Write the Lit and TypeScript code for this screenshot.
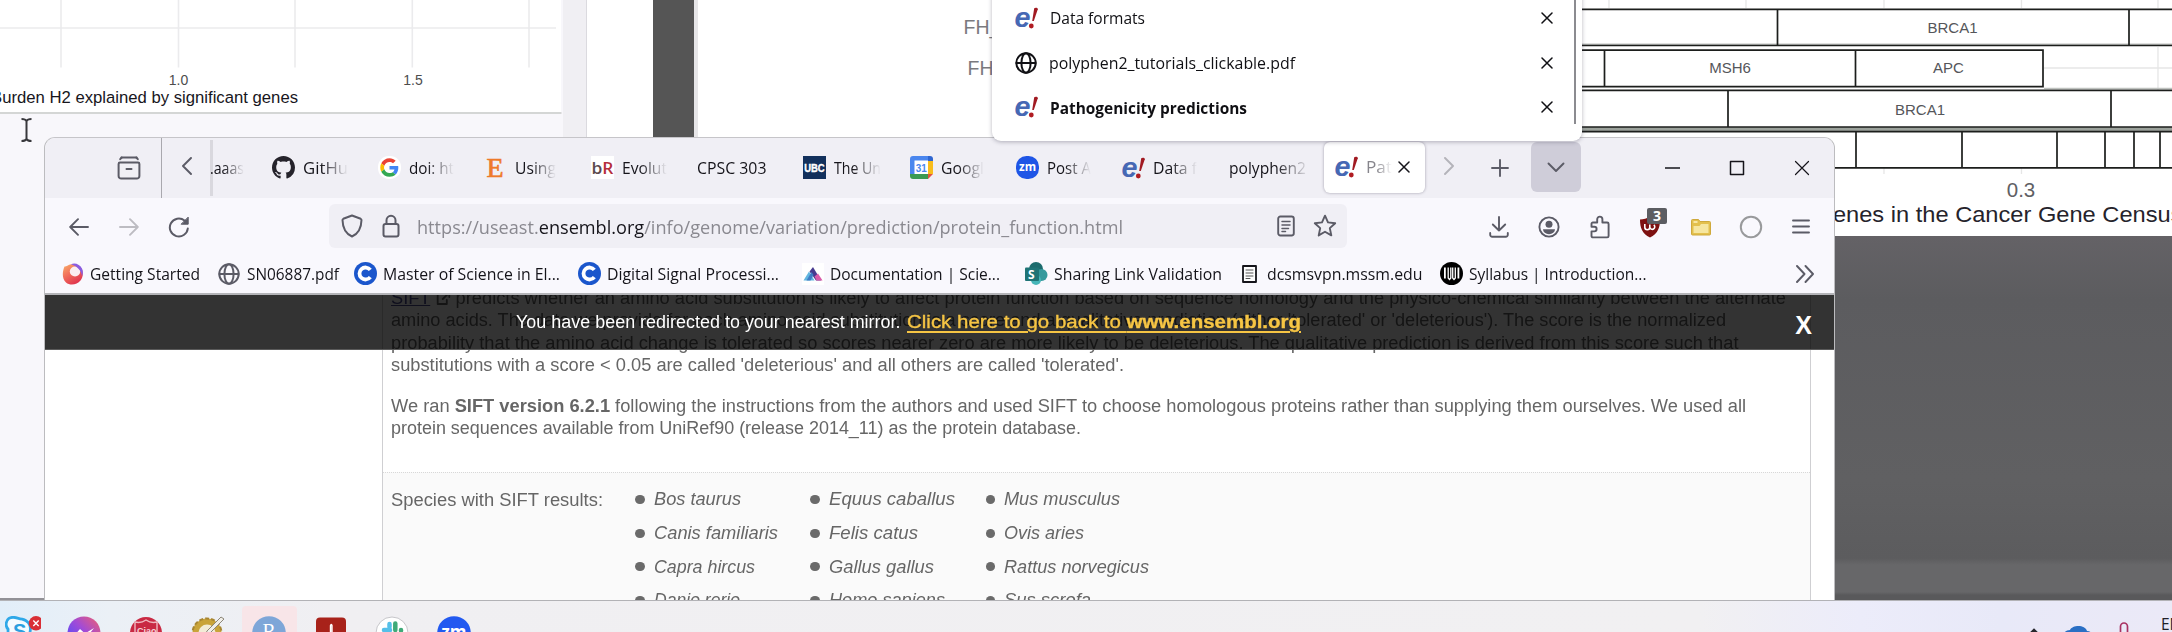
import { LitElement, html, svg, css } from "lit";
import { customElement, property, query } from "lit/decorators.js";

/* A label that condenses or widens its text to an exact advance width. */
@customElement("fit-label")
class FitLabel extends LitElement {
  @property({ type: Number }) w = 0;
  @query("span") box!: HTMLSpanElement;
  static styles = css`
    :host { display: inline-block; white-space: nowrap; flex: none; }
    span { display: inline-block; transform-origin: 0 50%; }
  `;
  updated() {
    const natural = this.box.offsetWidth;
    this.style.width = this.w + "px";
    if (natural && this.w) this.box.style.transform = `scaleX(${this.w / this.box.getBoundingClientRect().width})`;
  }
  render() { return html`<span><slot></slot></span>`; }
}

const line = (w: number, h: number, body: unknown, sw = 1.9) => html`
  <svg width=${w} height=${h} viewBox="0 0 ${w} ${h}" fill="none" stroke="currentColor" stroke-width=${sw}
    stroke-linecap="round" stroke-linejoin="round">${body}</svg>`;
const solid = (w: number, h: number, body: unknown) => html`
  <svg width=${w} height=${h} viewBox="0 0 ${w} ${h}">${body}</svg>`;

const ICON: Record<string, () => unknown> = {
  archive: () => line(24, 24, svg`<path d="M4.5 1.5h15M3 6.5h18a1.4 1.4 0 0 1 1.4 1.4V20a2.6 2.6 0 0 1-2.6 2.6H4.200A2.600 2.600 0 0 1 1.600 20V7.900A1.400 1.400 0 0 1 3 6.500zM9.500 13h5"/><path d="M3.200 3.200l1.500-1.700M20.800 3.200l-1.500-1.700"/>`, 2),
  left: () => line(12, 18, svg`<path d="M10 1L2 9l8 8"/>`),
  right: () => line(12, 18, svg`<path d="M2 1l8 8-8 8"/>`),
  down: () => line(18, 11, svg`<path d="M1.500 1.500L9 9l7.500-7.500"/>`),
  plus: () => line(18, 18, svg`<path d="M9 1v16M1 9h16"/>`),
  close: () => line(12, 12, svg`<path d="M1 1l10 10M11 1L1 11"/>`, 1.5),
  min: () => line(15, 4, svg`<path d="M.500 2h14"/>`, 1.6),
  max: () => line(16, 16, svg`<rect x="1.500" y="1.500" width="13" height="13"/>`, 1.5),
  winclose: () => line(16, 16, svg`<path d="M1.500 1.500l13 13M14.500 1.500l-13 13"/>`, 1.2),
  back: () => line(20, 18, svg`<path d="M19 9H1.500M9 1.200L1.200 9 9 16.800"/>`),
  forward: () => line(20, 18, svg`<path d="M1 9h17.500M11 1.200L18.800 9 11 16.800"/>`),
  reload: () => line(22, 22, svg`<path d="M19.800 12.500A9 9 0 1 1 16.500 4.500L19 6.600"/><path d="M20.200 1.500v6.700h-6.700z" fill="currentColor" stroke-width="1"/>`, 2),
  shield: () => line(22, 24, svg`<path d="M11 1.500l8.700 3.300a1.300 1.300 0 0 1 .8 1.300C20.300 14.500 17 20 11 22.500 5 20 1.700 14.500 1.500 6.100a1.300 1.300 0 0 1 .8-1.300z"/>`, 2),
  lock: () => line(18, 24, svg`<rect x="1.500" y="10" width="15" height="12.500" rx="2"/><path d="M4.500 10V6.300a4.500 4.500 0 0 1 9 0V10"/>`, 2),
  reader: () => line(18, 22, svg`<rect x="1.200" y="1.500" width="15.600" height="19" rx="2.200"/><path d="M5 6.500h8M5 10h8M5 13.500h6.500M5 16.500h3.500" stroke-width="1.500"/>`),
  star: () => line(24, 24, svg`<path d="M12 1.700l3 6.700 7.200.8-5.400 4.900 1.500 7.300L12 17.700l-6.300 3.700 1.500-7.300L1.800 9.200 9 8.400z"/>`),
  download: () => line(20, 22, svg`<path d="M10 1v13.500M3.800 8.500l6.200 6 6.200-6M1.200 17v1.600A2 2 0 0 0 3.200 20.700h13.600a2 2 0 0 0 2-2.100V17"/>`),
  account: () => line(22, 22, svg`<circle cx="11" cy="11" r="9.600"/><circle cx="11" cy="8.300" r="3.500" fill="currentColor" stroke="none"/><path d="M5 13.300h12a6 5 0 0 1-12 0z" fill="currentColor" stroke="none"/>`),
  puzzle: () => line(20, 24, svg`<path d="M7.200 7.500V4.200a2.600 2.600 0 0 1 5.200 0v3.300h4.800a1.400 1.400 0 0 1 1.400 1.400V21a1.400 1.400 0 0 1-1.400 1.400H2.900A1.400 1.400 0 0 1 1.500 21v-4.600h2.800a2.300 2.300 0 0 0 0-4.600H1.500V8.900a1.400 1.400 0 0 1 1.400-1.400z"/>`),
  ublock: () => solid(22, 22, svg`<path d="M11 .500c3 2 6.500 3 10 3 0 8-2 14-10 18C3 17.500 1 11.500 1 3.500c3.500 0 7-1 10-3z" fill="#7d1111"/><path d="M5.800 8v3.200a2.500 2.500 0 0 0 5 0V8.500m0 2.700a2.500 2.500 0 1 0 4-2.300" fill="none" stroke="#fff" stroke-width="1.600"/>`),
  folder: () => solid(22, 18, svg`<path d="M1.500 16V2.500a1 1 0 0 1 1-1h6l1.500 2h9.500a1 1 0 0 1 1 1V16a1 1 0 0 1-1 1h-17a1 1 0 0 1-1-1z" fill="#e3c04d" stroke="#cfa93c"/><path d="M3.500 15V8h6l1.500-2h7.500v9z" fill="#f6e6a0"/><path d="M3.500 4h4" stroke="#fff3c0" stroke-width="1.500"/>`),
  ring: () => line(24, 24, svg`<circle cx="12" cy="12" r="10.200" stroke="#999a9c"/>`, 2),
  menu: () => line(18, 15, svg`<path d="M1 1.500h16M1 7.500h16M1 13.500h16"/>`),
  more: () => line(20, 18, svg`<path d="M2 1l7.500 8L2 17M10.500 1l7.500 8-7.500 8"/>`),
  globe: () => line(22, 22, svg`<circle cx="11" cy="11" r="9.700"/><ellipse cx="11" cy="11" rx="4.600" ry="9.700"/><path d="M1.500 11h19" />`, 2),
  github: () => html`<svg width="23" height="23" viewBox="0 0 16 16"><path fill="#25232b" d="M8 0C3.580 0 0 3.580 0 8c0 3.540 2.290 6.530 5.470 7.590.4.070.55-.17.55-.38 0-.19-.01-.82-.01-1.490-2.010.37-2.530-.49-2.690-.94-.09-.23-.48-.94-.82-1.130-.28-.15-.68-.52-.01-.53.63-.01 1.080.58 1.230.82.72 1.210 1.870.87 2.330.66.07-.52.28-.87.51-1.070-1.780-.2-3.640-.89-3.640-3.950 0-.87.31-1.590.82-2.150-.08-.2-.36-1.020.08-2.120 0 0 .67-.21 2.200.82.64-.18 1.320-.27 2-.27.68 0 1.360.09 2 .27 1.530-1.040 2.200-.82 2.200-.82.44 1.100.16 1.920.08 2.120.51.56.82 1.270.82 2.150 0 3.070-1.870 3.750-3.650 3.950.29.25.54.73.54 1.480 0 1.070-.01 1.930-.01 2.200 0 .21.15.46.55.38A8.010 8.010 0 0 0 16 8c0-4.420-3.580-8-8-8z"/></svg>`,
  google: () => html`<svg width="23" height="23" viewBox="-6 -6 60 60"><rect x="-6" y="-6" width="60" height="60" rx="28" fill="#fff"/><path fill="#EA4335" d="M24 9.500c3.540 0 6.710 1.220 9.210 3.600l6.850-6.850C35.900 2.380 30.470 0 24 0 14.620 0 6.510 5.380 2.560 13.220l7.980 6.190C12.430 13.720 17.740 9.500 24 9.500z"/><path fill="#4285F4" d="M46.980 24.550c0-1.570-.15-3.090-.38-4.550H24v9.020h12.940c-.58 2.960-2.260 5.480-4.780 7.180l7.730 6c4.510-4.180 7.090-10.360 7.090-17.650z"/><path fill="#FBBC05" d="M10.530 28.590c-.48-1.450-.76-2.990-.76-4.590s.27-3.140.76-4.590l-7.980-6.190C.92 16.460 0 20.120 0 24s.92 7.540 2.560 10.780l7.970-6.190z"/><path fill="#34A853" d="M24 48c6.480 0 11.930-2.130 15.890-5.810l-7.730-6c-2.150 1.450-4.920 2.300-8.160 2.300-6.260 0-11.570-4.220-13.470-9.910l-7.980 6.190C6.510 42.620 14.620 48 24 48z"/></svg>`,
  eboard: () => solid(22, 23, svg`<text x="1.500" y="21" font-family="Liberation Serif" font-size="28" fill="#ee7a2a" stroke="#ee7a2a" stroke-width=".7">E</text>`),
  biorxiv: () => solid(23, 23, svg`<rect width="23" height="23" fill="#fff"/><text x="0.500" y="18" font-family="Open Sans, sans-serif" font-weight="600" font-size="17" fill="#5b4a4e" textLength="22" lengthAdjust="spacingAndGlyphs">b<tspan fill="#b52f3c">R</tspan></text>`),
  ubc: () => solid(23, 23, svg`<rect width="23" height="23" fill="#12305c"/><text x="1.200" y="16" font-family="Liberation Sans, sans-serif" font-weight="700" font-size="11.500" fill="#fff" stroke="#fff" stroke-width=".4" textLength="20.500" lengthAdjust="spacingAndGlyphs">UBC</text>`),
  calendar: () => solid(23, 23, svg`<path d="M3 0h15v5H5v13H0V3a3 3 0 0 1 3-3z" fill="#4a86ee"/><path d="M18 0h2a3 3 0 0 1 3 3v2h-5z" fill="#2f66d0"/><path d="M18 5h5v13h-5z" fill="#f8bd1c"/><path d="M0 18h18v5H3a3 3 0 0 1-3-3z" fill="#3b9a52"/><path d="M18 18h5l-5 5z" fill="#e2513f"/><rect x="4.500" y="4.500" width="13.500" height="13.500" fill="#fff"/><text x="5.800" y="15.600" font-family="Liberation Sans, sans-serif" font-size="11.500" font-weight="700" fill="#4a86ee" textLength="11" lengthAdjust="spacingAndGlyphs">31</text>`),
  zoom: () => solid(23, 23, svg`<rect width="23" height="23" rx="10.500" fill="#1f55e6"/><text x="3" y="14.800" font-family="Open Sans, sans-serif" font-weight="700" font-size="11.500" fill="#fff" textLength="17" lengthAdjust="spacingAndGlyphs">zm</text>`),
  ensembl: () => solid(23, 22, svg`<text x="-.500" y="19.500" font-family="Liberation Sans, sans-serif" font-style="italic" font-weight="700" font-size="27" fill="#4668b4" textLength="16" lengthAdjust="spacingAndGlyphs">e</text><path d="M19.200 1.200c1.200-.9 3.600-.6 3.600 1L18.800 14h-1.600z" fill="#a11a22"/><circle cx="16.300" cy="19" r="2.400" fill="#b01c22"/>`),
  firefox: () => html`<svg width="22" height="24" viewBox="0 0 22 24"><defs><linearGradient id="f" x1="0" y1="0" x2=".6" y2="1"><stop offset="0" stop-color="#f9b06a"/><stop offset=".45" stop-color="#f2745c"/><stop offset="1" stop-color="#e0344e"/></linearGradient></defs><path d="M2.500 4.500C4 5 6 3 8 2.500c3-.8 9-.5 11.500 4C21.500 10 21.300 15 18.500 18.500 15 23 8 24 4 20.500-.500 16.500.5 9 2.500 4.500z" fill="url(#f)"/><ellipse cx="13" cy="9.500" rx="5.200" ry="5" fill="#fbeef0"/><path d="M9 2.200c4-1.700 9 0 11.200 4.800 1 2.500.8 5-.2 7.200C19.500 9 16 4.500 9 2.200z" fill="#8a5ce0"/></svg>`,
  cblue: () => solid(23, 23, svg`<ellipse cx="11.500" cy="11.500" rx="11.500" ry="11.500" fill="#1b56cc"/><path d="M16.300 7.900A6 6 0 1 0 16.300 15.100" fill="none" stroke="#fff" stroke-width="3.800"/>`),
  sci: () => solid(22, 22, svg`<rect width="22" height="22" fill="#fff"/><path d="M1.500 17.500L7 8.500l5.500 9z" fill="#62b6e0"/><path d="M7.500 8.500L11 4l8 13.500h-5z" fill="#473a8f"/><path d="M14.500 17.500l-2-4 3.500-3 4.500 7z" fill="#d95aa8"/><path d="M4.500 17.500L9.500 9l2 3-3 5.500z" fill="#3f7cc4"/>`),
  sharepoint: () => solid(23, 23, svg`<circle cx="11" cy="7" r="7" fill="#1c6b6d"/><circle cx="16.500" cy="13" r="6" fill="#35999c"/><circle cx="11" cy="18" r="5" fill="#46b5b8"/><rect y="5.500" width="14" height="13.500" rx="1" fill="#1f7476"/><text x="3" y="16.500" font-family="Open Sans, sans-serif" font-weight="700" font-size="12" fill="#fff">S</text>`),
  page: () => line(15, 18, svg`<rect x="1" y="1" width="13" height="16" fill="#fdfdfd"/><path d="M4 5h7M4 8h7M4 11h7M4 13.500h4" stroke-width="1" stroke="#555"/>`, 1.8),
  canvas: () => solid(23, 23, svg`<circle cx="11.500" cy="11.500" r="11.500" fill="#000"/><path d="M4 5.500h1.800v11H4zM17.500 5.500h1.800v11h-1.800z" fill="#fff"/><path d="M8.200 5.500v10.500l1.300 1.500 1.300-1.500V5.500M12.700 5.500v10.500l1.300 1.500 1.300-1.500V5.500" stroke="#fff" stroke-width="1.300" fill="none"/>`),
  skype: () => solid(36, 36, svg`<path d="M5 2c7-4 11 1 17 1 8 2 12 8 10 17 2 7-3 14-12 12C8 33 3 26 4 16 0 12 1 5 5 2z" transform="scale(.78) translate(0 1)" fill="#f4fbff" stroke="#2fa8e8" stroke-width="3.500"/><text x="8" y="22" font-family="Liberation Sans, sans-serif" font-weight="700" font-size="20" fill="#2a9fe0">S</text><circle cx="31" cy="7.300" r="7.200" fill="#d92f36"/><path d="M28.300 4.600l5.400 5.400M33.700 4.600l-5.400 5.400" stroke="#fff" stroke-width="1.400"/>`),
  messenger: () => html`<svg width="34" height="34" viewBox="0 0 34 34"><defs><linearGradient id="m" x1="0" y1="1" x2="1" y2="0"><stop offset=".2" stop-color="#5f4cf5"/><stop offset=".55" stop-color="#a24bd6"/><stop offset="1" stop-color="#f2606c"/></linearGradient></defs><circle cx="17" cy="17" r="16.500" fill="url(#m)"/><path d="M6 21l7-8 5 4.500 9-5.500-7 9-5-4.500z" fill="#fff"/></svg>`,
  redshield: () => solid(34, 34, svg`<circle cx="17" cy="17" r="16" fill="#c92943"/><path d="M6 6q6 1.500 11-2 5 3.500 11 2v14q-3 7-11 9-8-2-11-9z" fill="none" stroke="#f0b8c0" stroke-width="1.400"/><text x="8" y="17.500" font-family="Liberation Sans, sans-serif" font-size="9" font-weight="700" fill="#f6d3d8">Ciao</text>`),
  gold: () => solid(36, 34, svg`<circle cx="17" cy="17" r="14.500" fill="#c9a43a" stroke="#a88632" stroke-width="2" stroke-dasharray="4 2"/><circle cx="17" cy="17" r="8.500" fill="#f2ecd6"/><path d="M31 1l3 2-15 15-4 1 2-4z" fill="#f0eee8" stroke="#8c8678"/>`),
  rstudio: () => solid(34, 34, svg`<circle cx="17" cy="17" r="16.800" fill="#7ea6d8"/><text x="10.500" y="22" font-family="Liberation Serif, serif" font-size="20" fill="#fff">R</text>`),
  acrobat: () => solid(30, 34, svg`<rect y="1.500" width="30" height="31" rx="4" fill="#a8221a"/><path d="M14.500 20V9.500q1-2 1.500 0V18" stroke="#fff" stroke-width="1.400" fill="none"/>`),
  slack: () => solid(34, 34, svg`<circle cx="17" cy="17" r="16" fill="#fff" stroke="#c6c6ca"/><path d="M14.500 8v3M9 14h6" stroke="#55bfe8" stroke-width="4.500" stroke-linecap="round"/><path d="M20.300 7.500v6.500M26 14v.5" stroke="#3faa78" stroke-width="4.500" stroke-linecap="round"/>`),
  zoomapp: () => solid(34, 34, svg`<circle cx="17" cy="17" r="16.800" fill="#2259f0"/><text x="4.500" y="22" font-family="Open Sans, sans-serif" font-weight="700" font-size="17" fill="#fff" textLength="25" lengthAdjust="spacingAndGlyphs">zm</text>`),
};
const icon = (name: string) => ICON[name]();

const TABS = [
  { icon: "github", text: "GitHu", w: 45 },
  { icon: "google", text: "doi: ht", w: 45 },
  { icon: "eboard", text: "Using", w: 41 },
  { icon: "biorxiv", text: "Evolut", w: 45 },
  { icon: "", text: "CPSC 303", w: 69.500 },
  { icon: "ubc", text: "The Un", w: 47 },
  { icon: "calendar", text: "Googl", w: 43 },
  { icon: "zoom", text: "Post A", w: 44 },
  { icon: "ensembl", text: "Data f", w: 44 },
  { icon: "", text: "polyphen2", w: 77 },
];
const BOOKMARKS = [
  { icon: "firefox", text: "Getting Started", w: 110, span: 156.500 },
  { icon: "globe", text: "SN06887.pdf", w: 92, span: 136.500 },
  { icon: "cblue", text: "Master of Science in El...", w: 177, span: 224 },
  { icon: "cblue", text: "Digital Signal Processi...", w: 172, span: 223 },
  { icon: "sci", text: "Documentation | Scie...", w: 170, span: 224 },
  { icon: "sharepoint", text: "Sharing Link Validation", w: 168, span: 213 },
  { icon: "page", text: "dcsmsvpn.mssm.edu", w: 155.500, span: 201.500 },
  { icon: "canvas", text: "Syllabus | Introduction...", w: 177.500, span: 210 },
];
const SPECIES = [
  [["Bos taurus", 87], ["Canis familiaris", 124], ["Capra hircus", 101], ["Danio rerio", 86]],
  [["Equus caballus", 126], ["Felis catus", 89], ["Gallus gallus", 105], ["Homo sapiens", 116]],
  [["Mus musculus", 116], ["Ovis aries", 80], ["Rattus norvegicus", 145], ["Sus scrofa", 87]],
] as [string, number][][];
const APPS = ["skype", "messenger", "redshield", "gold", "rstudio", "acrobat", "slack", "zoomapp"];

@customElement("left-chart")
class LeftChart extends LitElement {
  static styles = css`
    :host { display: block; }
    svg { display: block; font-family: "Liberation Sans", Arial, sans-serif; }
  `;
  render() {
    return html`<svg width="563" height="115" viewBox="0 0 563 115">
      <rect width="561" height="112" fill="#fff"/>
      <path d="M61 0v67.500M178.500 0v67.500M295 0v67.500M412.300 0v67.500M529 0v67.500M0 28h556" stroke="#ebebed" stroke-width="1.600"/>
      <path d="M0 113h561.500" stroke="#c9cbc9" stroke-width="1.600"/>
      <g font-size="14" fill="#4d4d4d" text-anchor="middle"><text x="178.500" y="85">1.0</text><text x="413" y="85">1.5</text></g>
      <text x="-9" y="102.500" font-size="17.200" fill="#17161c" textLength="307" lengthAdjust="spacingAndGlyphs">Burden H2 explained by significant genes</text>
    </svg>`;
  }
}

@customElement("gene-chart")
class GeneChart extends LitElement {
  static styles = css`
    :host { display: block; }
    svg { display: block; font-family: "Liberation Sans", Arial, sans-serif; }
  `;
  render() {
    return html`<svg width="1474" height="236" viewBox="698 0 1474 236">
      <rect x="698" width="1474" height="236" fill="#fff"/>
      <path d="M1609 0v8M1746 0v8M1884 0v8M2021.500 0v8M2158 0v8M2158 47v43M1884 168v6M2021.500 168v6M2044 68h128" stroke="#e6e6e6" stroke-width="1.300"/>
      <path d="M1582 127h590v5h-590z" fill="#9ba19b"/>
      <path d="M1582 44.300h590M2044 88.500h128" stroke="#bfc2bf" stroke-width="1.500"/>
      <g stroke="#1c1e1c" fill="none" stroke-width="1.700">
        <path d="M1582 9.300h590M1582 45.500h590M1777.500 9v36M2129 9v36"/>
        <path d="M1582 50.200h461v36.500h-461M1604.500 50v37M1855.500 50v37"/>
        <path d="M1582 90.300h590M1582 127h590M1728 90v37M2111 90v37"/>
        <path d="M1582 131.700h590M1800 167.800h372M1856 132v36M1962 132v36M2057 132v36M2105 132v36M2134 132v36M2160 132v36"/>
      </g>
      <g font-size="15" fill="#55565a" text-anchor="middle">
        <text x="1952.500" y="32.700">BRCA1</text><text x="1730" y="73">MSH6</text><text x="1948.500" y="73">APC</text><text x="1920" y="114.500">BRCA1</text>
      </g>
      <g font-size="19.500" fill="#7a7a7e"><text x="963.500" y="34">FH_</text><text x="967.500" y="75">FH_</text></g>
      <text x="2021" y="196.500" font-size="20.500" fill="#606064" text-anchor="middle">0.3</text>
      <text x="1814.500" y="222" font-size="22" fill="#25232b" textLength="368" lengthAdjust="spacingAndGlyphs">Genes in the Cancer Gene Census</text>
    </svg>`;
  }
}

@customElement("browser-window")
class BrowserWindow extends LitElement {
  static styles = css`
    :host { display: flex; flex-direction: column; box-sizing: border-box; height: 463px; border: 1px solid #bcbcbf; border-top-color: #c6c5c9; border-bottom: 0;
      border-radius: 11px 11px 0 0; overflow: hidden; background: #fff; color: #15141a;
      font: 16px/22px "Open Sans", "Noto Sans", sans-serif; }
    svg { display: block; flex: none; }
    .strip { display: flex; height: 60px; flex: none; background: #f0eff5; }
    .archive { box-sizing: border-box; width: 116.500px; border-right: 1.500px solid #a9a8ae; display: flex; align-items: center; padding-left: 72px; color: #5b5b66; }
    .scroll { width: 48.500px; display: flex; align-items: center; justify-content: center; color: #5b5b66; box-sizing: border-box; padding-left: 2px; padding-bottom: 4px; }
    .edge { width: 3px; height: 56px; background: #d9d8de; margin-right: -3px; margin-top: 2px; }
    .clipped { width: 51px; display: flex; align-items: center; overflow: hidden; box-sizing: border-box; padding-right: 17px; padding-bottom: 1px; }
    .tab { width: 106.300px; box-sizing: border-box; padding-left: 11px; padding-bottom: 1px; display: flex; align-items: center; gap: 8px; flex: none; }
    .fade { -webkit-mask-image: linear-gradient(90deg, #000 40%, transparent 100%); mask-image: linear-gradient(90deg, #000 40%, transparent 100%); }
    .fadelong { -webkit-mask-image: linear-gradient(90deg, #000 60%, rgba(0,0,0,.1) 100%); mask-image: linear-gradient(90deg, #000 60%, rgba(0,0,0,.1) 100%); }
    .active { width: 101.500px; height: 51px; margin: 4px 5px 0 0; background: #fff; border-radius: 6px; box-shadow: 0 0 3px rgba(60,55,80,.45); }
    .active fit-label { color: #86858c; }
    .active svg:last-child { margin-left: -2px; }
    .next { width: 38px; display: flex; align-items: center; justify-content: center; color: #b4b3ba; padding-bottom: 4px; }
    .new { width: 63px; display: flex; align-items: center; justify-content: center; color: #5b5b66; }
    .all { width: 50px; height: 50px; margin-top: 4px; background: #cfcdd9; border-radius: 6px; display: flex; align-items: center; justify-content: center; color: #5b5b66; }
    .controls { margin-left: auto; display: flex; padding-bottom: 1px; }
    .controls div { width: 64.500px; display: flex; align-items: center; justify-content: center; }
    .bar { display: flex; align-items: center; height: 56px; flex: none; background: #f9f8fd; padding: 0 7.500px 0 8.500px; color: #5b5b66; }
    .btn { width: 50px; display: flex; justify-content: center; position: relative; padding-top: 1px; }
    .btn.dim { color: #bdbcc2; }
    .url { margin-left: 125.500px; width: 1018px; height: 44px; background: #f0eff5; border-radius: 6px; display: flex; align-items: center; box-sizing: border-box; padding: 0 10px 0 12px; }
    .url fit-label { margin: 0 auto 0 16.500px; font-size: 19px; line-height: 26px; color: #8a8990; padding-top: 1px; }
    .url b { font-weight: 400; color: #15141a; }
    .url .lockbox { margin-left: 19px; }
    .url .starbox { margin-left: 18px; }
    .tools { margin-left: auto; display: flex; align-items: center; }
    .tools .btn { width: 50.400px; }
    .badge { position: absolute; left: 22px; top: -7px; width: 20px; height: 16px; border-radius: 2px; background: #5c5d62; color: #fff; font: 700 14px/16px "Open Sans", sans-serif; text-align: center; }
    .marks { display: flex; align-items: center; flex: none; background: #f9f8fd; padding: 0 19px 0 16.500px; color: #15141a; border-bottom: 2px solid #b4b4b8; box-sizing: border-box; height: 41px; }
    .mark { display: flex; align-items: center; flex: none; }
    .pic { width: 22px; margin-right: 6.500px; display: flex; justify-content: center; }
    .pic.gray, .more { color: #5b5b66; }
    .more { margin-left: auto; }
    .page { position: relative; flex: 1; overflow: hidden; font: 18px/22.600px "Liberation Sans", Arial, sans-serif; color: #666; }
    .panel { margin: 0 23px 0 337px; border: 1px solid #cfcfd2; border-width: 0 1px; height: 310px; }
    .text { padding: 0 8px; height: 177px; box-sizing: border-box; overflow: hidden; }
    .text fit-label { display: block; margin: 0; height: 22.600px; }
    .text .first { margin-top: -8.500px; }
    .text .second { margin-top: 17.700px; }
    .first a { color: #4a4a90; text-decoration: underline; }
    .first svg { display: inline-block; vertical-align: -2px; }
    .species { border-top: 1px dotted #d8d8d8; background: #fafafa; display: flex; padding: 9.500px 8px 0; height: 130px; }
    .species .label { width: 244px; line-height: 34px; }
    ul { list-style: none; margin: 0; padding: 0; width: 175.300px; font-style: italic; }
    li { display: flex; align-items: center; height: 33.800px; gap: 9px; }
    li::before { content: ""; width: 9.500px; height: 9px; border-radius: 50%; background: #6a6a6a; }
    .banner { position: absolute; inset: 0 0 auto 0; height: 55px; background: rgba(0,0,0,.8); color: #fff; display: flex; align-items: center; padding: 1px 0 0 470.500px; box-sizing: border-box; font-size: 18px; border-bottom: 1px solid #5a5a5a; }
    .banner .back { color: #f6c544; margin-left: 7px; }
    .banner u { text-decoration: underline; text-underline-offset: 3px; text-decoration-thickness: 1.500px; -webkit-text-stroke: .35px #f6c544; }
    .dismiss { margin: 5px 22px 0 auto; font-weight: 700; font-size: 25px; }
    .banner .dismiss { line-height: 26px; }
  `;
  render() {
    return html`
      <div class="strip">
        <div class="archive">${icon("archive")}</div>
        <div class="scroll">${icon("left")}</div>
        <div class="edge"></div>
        <div class="clipped"><fit-label class="fade" .w=${34}>.aaas</fit-label></div>
        ${TABS.map(t => html`<div class="tab">${t.icon ? icon(t.icon) : ""}<fit-label class=${t.text === "CPSC 303" ? "" : t.icon ? "fade" : "fadelong"} .w=${t.w}>${t.text}</fit-label></div>`)}
        <div class="tab active">${icon("ensembl")}<fit-label class="fade" .w=${26}>Pat</fit-label>${icon("close")}</div>
        <div class="next">${icon("right")}</div>
        <div class="new">${icon("plus")}</div>
        <div class="all">${icon("down")}</div>
        <div class="controls"><div>${icon("min")}</div><div>${icon("max")}</div><div>${icon("winclose")}</div></div>
      </div>
      <div class="bar">
        <div class="btn">${icon("back")}</div><div class="btn dim">${icon("forward")}</div><div class="btn">${icon("reload")}</div>
        <div class="url">
          ${icon("shield")}<div class="lockbox">${icon("lock")}</div>
          <fit-label .w=${706}>https://useast.<b>ensembl.org</b>/info/genome/variation/prediction/protein_function.html</fit-label>
          ${icon("reader")}<div class="starbox">${icon("star")}</div>
        </div>
        <div class="tools">
          <div class="btn">${icon("download")}</div><div class="btn">${icon("account")}</div><div class="btn">${icon("puzzle")}</div>
          <div class="btn">${icon("ublock")}<span class="badge">3</span></div>
          <div class="btn">${icon("folder")}</div><div class="btn">${icon("ring")}</div><div class="btn">${icon("menu")}</div>
        </div>
      </div>
      <div class="marks">
        ${BOOKMARKS.map(b => html`<div class="mark" style="width:${b.span}px"><span class="pic ${b.icon === "globe" ? "gray" : ""}">${icon(b.icon)}</span><fit-label .w=${b.w}>${b.text}</fit-label></div>`)}
        <div class="more">${icon("more")}</div>
      </div>
      <div class="page">
        <div class="panel">
          <div class="text">
            <fit-label class="first" .w=${1395}><a>SIFT</a>${line(15, 15, svg`<path d="M6 3H2v10h9V9M7 8l6-6M9 1.500h4.500V6"/>`, 1.8)} predicts whether an amino acid substitution is likely to affect protein function based on sequence homology and the physico-chemical similarity between the alternate</fit-label>
            <fit-label .w=${1335}>amino acids. The data we provide for each amino acid substitution is a score and a qualitative prediction (either 'tolerated' or 'deleterious'). The score is the normalized</fit-label>
            <fit-label .w=${1347.500}>probability that the amino acid change is tolerated so scores nearer zero are more likely to be deleterious. The qualitative prediction is derived from this score such that</fit-label>
            <fit-label .w=${733}>substitutions with a score &lt; 0.05 are called 'deleterious' and all others are called 'tolerated'.</fit-label>
            <fit-label class="second" .w=${1355}>We ran <b>SIFT version 6.2.1</b> following the instructions from the authors and used SIFT to choose homologous proteins rather than supplying them ourselves. We used all</fit-label>
            <fit-label .w=${690}>protein sequences available from UniRef90 (release 2014_11) as the protein database.</fit-label>
          </div>
          <div class="species">
            <div class="label"><fit-label .w=${212}>Species with SIFT results:</fit-label></div>
            ${SPECIES.map(col => html`<ul>${col.map(([n, w]) => html`<li><fit-label .w=${w}>${n}</fit-label></li>`)}</ul>`)}
          </div>
        </div>
        <div class="banner">
          <fit-label .w=${384.500}>You have been redirected to your nearest mirror.</fit-label>
          <a class="back"><fit-label .w=${394}><u>Click here to go back to <b>www.ensembl.org</b></u></fit-label></a>
          <span class="dismiss">X</span>
        </div>
      </div>`;
  }
}

@customElement("tab-menu")
class TabMenu extends LitElement {
  static styles = css`
    :host { display: flex; flex-direction: column; box-sizing: border-box; width: 590px; height: 151px; background: #fff; border-radius: 0 0 9px 9px;
      box-shadow: 0 1px 4px rgba(50,45,70,.35); padding: 5.500px 6px 0 23px; color: #101014; font: 16px/24px "Open Sans", "Noto Sans", sans-serif; }
    .row { display: flex; align-items: center; height: 44.800px; }
    .row svg { display: block; }
    .row fit-label { margin: 1px auto 0 11.500px; }
    .row .x { margin-right: 23px; }
    b { font-weight: 700; }
    .thumb { position: absolute; right: 6px; top: 0; width: 2px; height: 134px; background: #8b8b90; }
  `;
  render() {
    return html`
      <div class="row">${icon("ensembl")}<fit-label .w=${95}>Data formats</fit-label><span class="x">${icon("close")}</span></div>
      <div class="row">${icon("globe")}<fit-label .w=${246}>polyphen2_tutorials_clickable.pdf</fit-label><span class="x">${icon("close")}</span></div>
      <div class="row">${icon("ensembl")}<fit-label .w=${197}><b>Pathogenicity predictions</b></fit-label><span class="x">${icon("close")}</span></div>
      <div class="thumb"></div>`;
  }
}

@customElement("task-bar")
class TaskBar extends LitElement {
  static styles = css`
    :host { display: flex; box-sizing: border-box; height: 32px; overflow: hidden; border-top: 1.500px solid #b2b2b6;
      background: linear-gradient(90deg, #e2eef9 0, #ebf0f6 110px, #f0eff2 330px, #f1f0f2 1700px, #ececfa 1860px, #e8e9f8 2000px, #ebe9f7 100%); }
    .apps { display: flex; margin-left: -8px; }
    .app { width: 61.600px; height: 50px; display: flex; justify-content: center; align-items: flex-start; padding-top: 15px; box-sizing: border-box; }
    .current { background: #f8e5e8; border-radius: 4px; width: 55px; margin: 5px 3.300px 0; padding-top: 10px; }
    .tray { margin-left: auto; display: flex; align-items: flex-start; font: 15.500px/20px "Open Sans", sans-serif; color: #202028; }
    .tray svg { display: block; }
    .lang { width: 11px; overflow: hidden; padding-top: 13px; height: 20px; white-space: nowrap; }
  `;
  render() {
    return html`
      <div class="apps">${APPS.map(a => html`<div class="app ${a === "rstudio" ? "current" : ""}">${icon(a)}</div>`)}</div>
      <div class="tray">
        <svg width="132" height="31" viewBox="2029 601 132 31"><path d="M2027 637l7-7 7 7" stroke="#26262c" stroke-width="2.500" fill="none"/>
          <path d="M2062 640c0-6 3-10 8-10 2-5 15-6 17 1 5 0 6 4 6 9z" fill="#2a6fc4"/><rect x="2120.500" y="623" width="7" height="16" rx="3.500" fill="none" stroke="#a83262" stroke-width="1.700"/></svg>
        <div class="lang">ENG</div>
      </div>`;
  }
}

@customElement("app-root")
class AppRoot extends LitElement {
  static styles = css`
    :host { display: block; position: relative; width: 2172px; height: 632px; overflow: hidden; background: #f8f7fb; }
    .viewer { position: absolute; left: 587px; top: 0; width: 1585px; height: 600px; display: flex; align-items: flex-start;
      background: linear-gradient(180deg, #646266 236px, #5c5c5f 300px, #606062 480px, #5c5c5e 558px, #676769 565px, #676769 592px, #59595b 595px, #59595b 100%); }
    .gap { width: 66px; height: 600px; background: #fff; }
    .gutter { width: 41px; height: 600px; background: #555; border-right: 4px solid #e7e6e8; }
    .plot { position: absolute; left: 0; top: 0; }
    .band { position: absolute; left: 563px; top: 0; width: 23px; height: 600px; background: #f0eff3; border-right: 1.500px solid #dbdadf; }
    .foot { position: absolute; left: 0; top: 598px; width: 44px; height: 2px; background: #929196; }
    browser-window { position: absolute; left: 44px; top: 137px; width: 1791px; }
    tab-menu { position: absolute; left: 992px; top: -10px; }
    task-bar { position: absolute; left: 0; top: 600px; width: 2172px; }
    .cursor { position: absolute; left: 20px; top: 117px; }
  `;
  render() {
    return html`
      <div class="viewer"><div class="gap"></div><div class="gutter"></div><gene-chart></gene-chart></div>
      <left-chart class="plot"></left-chart>
      <div class="band"></div>
      <div class="foot"></div>
      <svg class="cursor" width="13" height="26" viewBox="0 0 13 26" fill="none" stroke="#38383c" stroke-width="2"><path d="M1.500 2q4 0 5 2 1-2 5-2M6.500 4v18M1.500 24q4 0 5-2 1 2 5 2"/></svg>
      <browser-window></browser-window>
      <tab-menu></tab-menu>
      <task-bar></task-bar>`;
  }
}
